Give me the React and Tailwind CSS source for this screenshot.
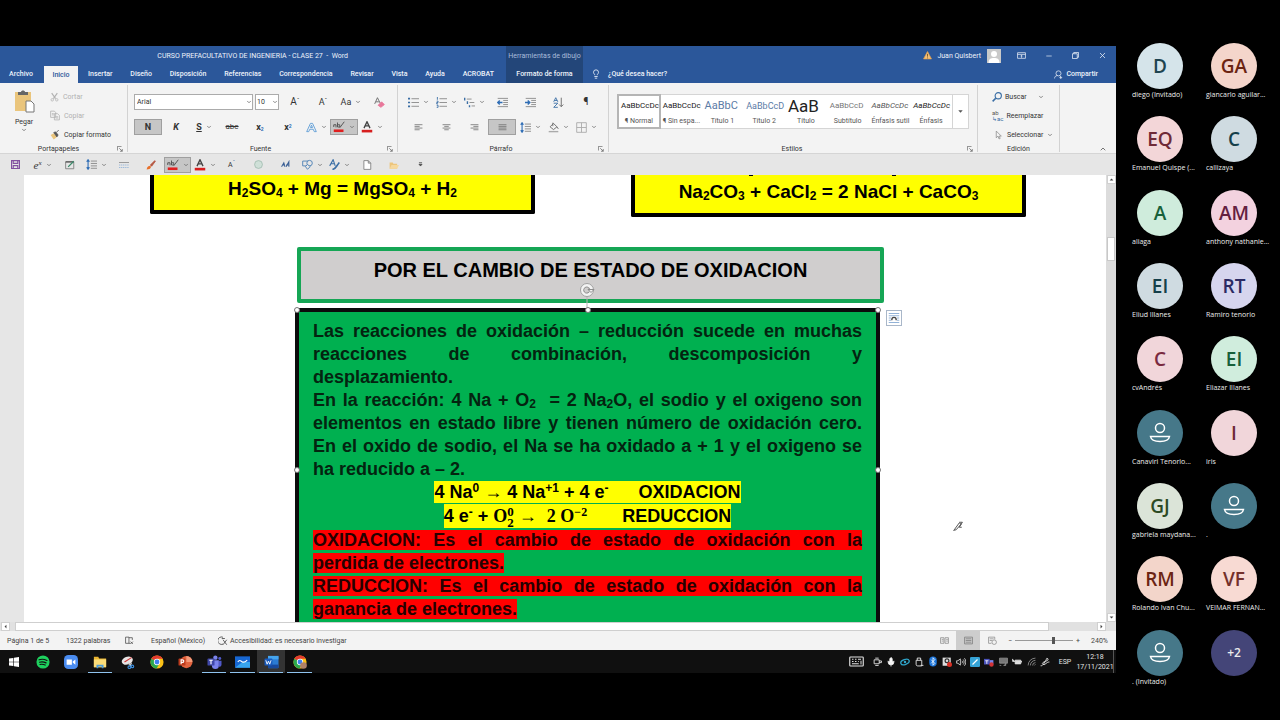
import React from 'react';
import { ChevronDown, ChevronUp, Lightbulb, Mic, X, Minus } from 'lucide-react';

const tabs = ['Insertar', 'Diseño', 'Disposición', 'Referencias', 'Correspondencia', 'Revisar', 'Vista', 'Ayuda', 'ACROBAT'];

const styles = [
    { name: '¶ Normal', sample: 'AaBbCcDc', look: 'text-[8px] text-[#222]', active: true },
    { name: '¶ Sin espa...', sample: 'AaBbCcDc', look: 'text-[8px] text-[#222]' },
    { name: 'Título 1', sample: 'AaBbC', look: 'text-[11px] text-[#5b7ba6]' },
    { name: 'Título 2', sample: 'AaBbCcD', look: 'text-[9px] text-[#5b7ba6]' },
    { name: 'Título', sample: 'AaB', look: 'text-[17px] text-[#222]' },
    { name: 'Subtítulo', sample: 'AaBbCcD', look: 'text-[8px] text-[#777]' },
    { name: 'Énfasis sutil', sample: 'AaBbCcDc', look: 'text-[8px] italic text-[#555]' },
    { name: 'Énfasis', sample: 'AaBbCcDc', look: 'text-[8px] italic text-[#222]' },
];

const people = [
    { initials: 'D', name: 'diego (Invitado)', color: 'bg-[#d5e4ea] text-[#1f4450]' },
    { initials: 'GA', name: 'giancarlo aguilar...', color: 'bg-[#f4d5cb] text-[#6b2412]' },
    { initials: 'EQ', name: 'Emanuel Quispe (...', color: 'bg-[#f3d6d8] text-[#6f2a37]' },
    { initials: 'C', name: 'callizaya', color: 'bg-[#cfdbe1] text-[#153f4a]' },
    { initials: 'A', name: 'aliaga', color: 'bg-[#cfecdc] text-[#17603a]' },
    { initials: 'AM', name: 'anthony nathanie...', color: 'bg-[#f3d2df] text-[#64203f]' },
    { initials: 'EI', name: 'Eliud Illanes', color: 'bg-[#cfdbe1] text-[#153f4a]' },
    { initials: 'RT', name: 'Ramiro tenorio', color: 'bg-[#d6d5ee] text-[#2b2a63]' },
    { initials: 'C', name: 'cvAndrés', color: 'bg-[#f1d6da] text-[#7a2a3f]' },
    { initials: 'EI', name: 'Eliazar Illanes', color: 'bg-[#d0eddd] text-[#17603a]' },
    { name: 'Canaviri Tenorio...', color: 'bg-[#467889] text-white' },
    { initials: 'I', name: 'iris', color: 'bg-[#f1d6da] text-[#6f2a37]' },
    { initials: 'GJ', name: 'gabriela maydana...', color: 'bg-[#dbe4d8] text-[#2c4a23]' },
    { name: '.', color: 'bg-[#467889] text-white' },
    { initials: 'RM', name: 'Rolando Ivan Chu...', color: 'bg-[#f3d5ca] text-[#6b2412]' },
    { initials: 'VF', name: 'VEIMAR FERNAN...', color: 'bg-[#f8dad3] text-[#74302b]' },
    { name: '. (Invitado)', color: 'bg-[#467889] text-white' },
];

export default function App() {
    return (
        <div className="min-h-screen bg-black flex text-[7px] leading-[10px] text-[#333]">
            <main className="flex-1 min-w-0 pt-[46px] font-[Roboto,sans-serif]">
                <TitleBar />
                <Ribbon />
                <QuickAccess />
                <Document />
                <StatusBar />
                <Taskbar />
            </main>
            <Participants />
        </div>
    );
}

/* ---------- helpers ---------- */

function Svg({ className = 'w-3 h-3', box = '0 0 16 16', children }) {
    return (
        <svg className={`shrink-0 ${className}`} viewBox={box} fill="none" stroke="currentColor" strokeWidth="1.3">
            {children}
        </svg>
    );
}

function Caret() {
    return <ChevronDown className="w-[6px] h-[6px] shrink-0 text-[#666]" strokeWidth={3} />;
}

function Tool({ label, caret, active, width = 'w-7', children }) {
    return (
        <button
            aria-label={label}
            className={`${width} h-4 shrink-0 flex items-center justify-center gap-1 ${active ? 'bg-[#c6c6c6] border border-[#9f9f9f]' : ''}`}
        >
            {children}
            {caret && <Caret />}
        </button>
    );
}

function Group({ title, className = '', launcher = true, children }) {
    return (
        <section className={`flex flex-col border-r border-[#d2d2d2] mt-[2px] mb-[1px] ${className}`}>
            <div className="flex-1 min-h-0">{children}</div>
            <div className="flex items-center h-[6px]">
                <h2 className="flex-1 text-center">{title}</h2>
                {launcher && (
                    <button aria-label={`Opciones de ${title}`} className="mr-1">
                        <Svg className="w-[6px] h-[6px] text-[#666]">
                            <path d="M1 12V1h11M6 6l8 8M14 8v6H8" strokeWidth="2" />
                        </Svg>
                    </button>
                )}
            </div>
        </section>
    );
}

/* ---------- title bar and tabs ---------- */

function TitleBar() {
    return (
        <header className="bg-[#2b579a] text-[#eef3fa] flex h-[37px]">
            <div className="w-[506px] flex flex-col">
                <div className="h-[19px] flex items-center justify-end pr-[158px] whitespace-pre">CURSO PREFACULTATIVO DE INGENIERIA - CLASE 27  -  Word</div>
                <nav className="flex-1 flex items-stretch font-medium">
                    <button className="w-11 pr-[2px]">Archivo</button>
                    <button className="w-[34px] mt-[1px] bg-[#f3f3f3] text-[#2b579a]">Inicio</button>
                    <div className="flex-1 flex items-stretch justify-between pl-[10px] pr-3">
                        {tabs.map((t) => <button key={t}>{t}</button>)}
                    </div>
                </nav>
            </div>
            <div className="w-[77px] bg-[#234679] flex flex-col text-center">
                <div className="h-[19px] flex items-center justify-center whitespace-nowrap text-[#a9bddb]">Herramientas de dibujo</div>
                <button className="flex-1 font-medium">Formato de forma</button>
            </div>
            <div className="flex-1 flex flex-col">
                <div className="h-[19px] flex items-center justify-end">
                    <Svg className="w-[9px] h-[9px] mr-[5px]" box="0 0 16 16">
                        <path d="M8 1l7 13H1z" fill="#f2c078" stroke="#e9a24a" />
                        <path d="M8 5v5M8 11.500v1.500" stroke="#5a3a10" />
                    </Svg>
                    <span>Juan Quisbert</span>
                    <Svg className="w-[14px] h-[14px] ml-[6px]" box="0 0 14 14">
                        <rect width="14" height="14" fill="#c9c9c9" stroke="none" />
                        <circle cx="7" cy="5" r="3" fill="#fff" stroke="none" />
                        <path d="M1.500 14c0-4 2-5 5.500-5s5.500 1 5.500 5z" fill="#fff" stroke="none" />
                    </Svg>
                    <button aria-label="Opciones de presentación" className="w-[27px] ml-[7px] flex justify-center">
                        <Svg className="w-[9px] h-[9px]"><path d="M1 3h14v10H1zM1 6h14M8 12V8M6 9.500l2-2 2 2" /></Svg>
                    </button>
                    <button aria-label="Minimizar" className="w-[27px] flex justify-center"><Minus className="w-2 h-2" /></button>
                    <button aria-label="Restaurar" className="w-[27px] flex justify-center">
                        <Svg className="w-[7px] h-[7px]"><path d="M1 4h11v11H1zM4 4V1h11v11h-3" strokeWidth="1.8" /></Svg>
                    </button>
                    <button aria-label="Cerrar" className="w-[27px] flex justify-center"><X className="w-[9px] h-[9px]" /></button>
                </div>
                <div className="flex-1 flex items-center justify-between pl-[8px] pr-[18px] font-medium">
                    <button className="flex items-center gap-[7px]">
                        <Lightbulb className="w-[10px] h-[10px]" /> ¿Qué desea hacer?
                    </button>
                    <button className="flex items-center gap-[3px]">
                        <Svg className="w-[9px] h-[9px]"><circle cx="8" cy="6" r="4.500" /><path d="M1 15c0-3 2-5 5-5M10 10l2 2M12 11v5M9.500 13.500h5" /></Svg>
                        Compartir
                    </button>
                </div>
            </div>
        </header>
    );
}

/* ---------- ribbon ---------- */

function Lines({ rows }) {
    return <Svg className="w-[9px] h-[9px] text-[#777]"><path d={rows} strokeWidth="1.500" /></Svg>;
}

function Ribbon() {
    return (
        <div className="bg-[#f3f3f3] h-[71px] flex border-b border-[#d5d5d5]">
            <Group title="Portapapeles" className="w-32">
                <div className="flex pt-[2px]">
                    <button className="w-12 pt-[3px] flex flex-col items-center self-start">
                        <Svg className="w-[22px] h-[23px]" box="0 0 22 23">
                            <rect x="2" y="2" width="16" height="19" fill="#eac57c" stroke="none" />
                            <path d="M5 5V2h3c0-2 4-2 4 0h3v3z" fill="#666" stroke="none" />
                            <path d="M13 11h5l3 3v8h-8z" fill="#fff" stroke="#777" strokeWidth="1" />
                        </Svg>
                        <span className="mt-[4px]">Pegar</span>
                        <Caret />
                    </button>
                    <div className="flex flex-col">
                        <button className="h-[19px] pl-[2px] flex items-center gap-[4px] text-[#b1b1b1]">
                            <Svg className="w-[9px] h-[10px]"><path d="M3 1l7 10M13 1L6 11" strokeWidth="2" /><circle cx="4" cy="13" r="2.200" /><circle cx="12" cy="13" r="2.200" /></Svg>
                            Cortar
                        </button>
                        <button className="h-[19px] pl-[2px] flex items-center gap-[4px] text-[#b1b1b1]">
                            <Svg className="w-[10px] h-[11px]"><path d="M1 1h6l2 2v8H1zM7 5h5l3 3v7H7zM3 5h3M3 7h3M9 10h4M9 12h4" /></Svg>
                            Copiar
                        </button>
                        <button className="h-[19px] pl-[2px] flex items-center gap-[4px]">
                            <Svg className="w-[10px] h-[10px]">
                                <path d="M1 8l5-3 5 6-5 4z" fill="#eac57c" stroke="none" />
                                <path d="M6 4l3-1 4 5-2 3zM10 4l4-4" stroke="#555" fill="#555" />
                            </Svg>
                            Copiar formato
                        </button>
                    </div>
                </div>
            </Group>

            <Group title="Fuente" className="w-[270px] pl-[6px]">
                <div className="flex items-center pt-[9px]">
                    <label className="relative mr-[2px]">
                        <select aria-label="Fuente" className="block appearance-none w-[119px] h-4 bg-white border border-[#ababab] pl-[2px]"><option>Arial</option></select>
                        <span className="absolute right-[1px] top-[5px]"><Caret /></span>
                    </label>
                    <label className="relative mr-[2px]">
                        <select aria-label="Tamaño de fuente" className="block appearance-none w-6 h-4 bg-white border border-[#ababab] pl-[1px]"><option>10</option></select>
                        <span className="absolute right-[1px] top-[5px]"><Caret /></span>
                    </label>
                    <Tool label="Aumentar tamaño"><span className="text-[10px]">A<sup className="text-[6px]">ˆ</sup></span></Tool>
                    <Tool label="Disminuir tamaño"><span className="text-[9px]">A<sup className="text-[6px]">ˇ</sup></span></Tool>
                    <Tool label="Cambiar mayúsculas" caret><span className="text-[9px]">Aa</span></Tool>
                    <Tool label="Borrar formato">
                        <Svg className="w-[11px] h-[11px]"><path d="M1 10L5 1l4 8M3 7h4" stroke="#666" /><path d="M6 12l5-5 4 4-5 4z" fill="#e8779a" stroke="#e8779a" /></Svg>
                    </Tool>
                </div>
                <div className="flex items-center pt-[9px]">
                    <Tool label="Negrita" active><b className="text-[9px]">N</b></Tool>
                    <Tool label="Cursiva"><b className="text-[9px] italic">K</b></Tool>
                    <Tool label="Subrayado" caret><b className="text-[9px] underline">S</b></Tool>
                    <Tool label="Tachado"><span className="text-[8px] line-through">abc</span></Tool>
                    <Tool label="Subíndice"><b className="text-[9px]">x<sub className="text-[5px] text-[#2f6db5]">2</sub></b></Tool>
                    <Tool label="Superíndice"><b className="text-[9px]">x<sup className="text-[5px] text-[#2f6db5]">2</sup></b></Tool>
                    <Tool label="Efectos de texto" caret><OutlinedA /></Tool>
                    <Tool label="Resaltado" caret active><Marker /></Tool>
                    <Tool label="Color de fuente" caret><FontColor /></Tool>
                </div>
            </Group>

            <Group title="Párrafo" className="w-[211px] pl-[6px]">
                <div className="flex items-center pt-[9px]">
                    <Tool label="Viñetas" caret>
                        <Svg className="w-[11px] h-[11px]"><path d="M5 2.500h11M5 8h11M5 13.500h11" stroke="#888" /><path d="M0 2.500h3M0 8h3M0 13.500h3" stroke="#3a6ea5" strokeWidth="2.500" /></Svg>
                    </Tool>
                    <Tool label="Numeración" caret>
                        <Svg className="w-[11px] h-[11px]"><path d="M5 2.500h11M5 8h11M5 13.500h11" stroke="#888" /><path d="M2 0v4M1 6h2v2H1v2h2M1 12h2v3H1" stroke="#3a6ea5" /></Svg>
                    </Tool>
                    <Tool label="Lista multinivel" caret>
                        <Svg className="w-[11px] h-[11px]"><path d="M4 3h7M8 8h7M11 13h5" stroke="#888" /><path d="M1 1v4M5 6v4M8 12v3" stroke="#3a6ea5" strokeWidth="2" /></Svg>
                    </Tool>
                    <Tool label="Disminuir sangría">
                        <Svg className="w-[11px] h-[11px]"><path d="M1 2h15M9 5h7M9 8h7M9 11h7M1 14h15" stroke="#888" /><path d="M8 8H1M4 5L1 8l3 3" stroke="#2f6db5" strokeWidth="2" /></Svg>
                    </Tool>
                    <Tool label="Aumentar sangría">
                        <Svg className="w-[11px] h-[11px]"><path d="M1 2h15M9 5h7M9 8h7M9 11h7M1 14h15" stroke="#888" /><path d="M0 8h7M4 5l3 3-3 3" stroke="#2f6db5" strokeWidth="2" /></Svg>
                    </Tool>
                    <Tool label="Ordenar">
                        <Svg className="w-[11px] h-[11px]"><path d="M1 7l3-6 3 6M2 5h4M1 9h6l-6 6h6" stroke="#3a6ea5" /><path d="M12 1v13M9 11l3 3 3-3" stroke="#666" /></Svg>
                    </Tool>
                    <Tool label="Mostrar todo"><span className="text-[10px]">¶</span></Tool>
                </div>
                <div className="flex items-center pt-[9px]">
                    <Tool label="Alinear a la izquierda"><Lines rows="M1 3h14M1 6h9M1 9h14M1 12h9" /></Tool>
                    <Tool label="Centrar"><Lines rows="M1 3h14M4 6h8M1 9h14M4 12h8" /></Tool>
                    <Tool label="Alinear a la derecha"><Lines rows="M1 3h14M6 6h9M1 9h14M6 12h9" /></Tool>
                    <Tool label="Justificar" active><Lines rows="M1 3h14M1 6h14M1 9h14M1 12h14" /></Tool>
                    <Tool label="Espaciado" caret><Spacing /></Tool>
                    <Tool label="Sombreado" caret>
                        <Svg className="w-[11px] h-[11px]"><path d="M3 7l5-5 5 5-5 4zM7 1v5M13 7l2 3" stroke="#666" /><path d="M1 14h14" stroke="#aaa" strokeWidth="2" /></Svg>
                    </Tool>
                    <Tool label="Bordes" caret>
                        <Svg className="w-[11px] h-[11px]"><path d="M1 1h14v14H1zM8 1v14M1 8h14" stroke="#aaa" /></Svg>
                    </Tool>
                </div>
            </Group>

            <Group title="Estilos" className="flex-1 min-w-0 pl-[8px]">
                <div className="mt-[9px] mr-2 h-[35px] flex bg-white border border-[#d5d5d5]">
                    {styles.map((s) => (
                        <button key={s.name} className={`flex-1 min-w-0 flex flex-col px-[3px] overflow-hidden ${s.active ? 'outline-2 -outline-offset-1 outline-[#b5b5b5]' : ''}`}>
                            <span className={`h-[21px] w-full flex items-center justify-start whitespace-nowrap ${s.look}`}>{s.sample}</span>
                            <span className="w-full text-center whitespace-nowrap text-[#555]">{s.name}</span>
                        </button>
                    ))}
                    <button aria-label="Más estilos" className="w-4 border-l border-[#d5d5d5] flex items-center justify-center">
                        <Svg className="w-[5px] h-[5px]"><path d="M1 4h14l-7 8z" fill="#555" stroke="none" /></Svg>
                    </button>
                </div>
            </Group>

            <Group title="Edición" launcher={false} className="w-[82px]">
                <div className="flex flex-col pl-[14px] pt-[2px]">
                    <button className="h-[19px] flex items-center gap-[3px]">
                        <Svg className="w-[10px] h-[10px] text-[#3a6ea5]"><circle cx="10" cy="6" r="5" strokeWidth="1.800" /><path d="M6 10l-5 5" strokeWidth="2.500" /></Svg>
                        Buscar <span className="ml-[8px]"><Caret /></span>
                    </button>
                    <button className="h-[19px] flex items-center gap-[3px]">
                        <span className="text-[6px] leading-[6px] text-[#555] text-left">ab<br /><span className="text-[#3a6ea5]">↳ac</span></span>
                        Reemplazar
                    </button>
                    <button className="h-[19px] flex items-center gap-[4px] pl-[2px]">
                        <Svg className="w-[9px] h-[10px] text-[#888]"><path d="M4 1v12l3-3 2 5 2-1-2-4h4z" /></Svg>
                        Seleccionar <Caret />
                    </button>
                </div>
            </Group>

            <div className="w-14 flex items-end justify-end pr-[9px]">
                <button aria-label="Contraer la cinta"><ChevronUp className="w-[8px] h-[8px]" /></button>
            </div>
        </div>
    );
}

function OutlinedA() {
    return (
        <Svg className="w-[11px] h-[11px]">
            <path d="M1 14L6.500 2h3L15 14h-3l-1.500-3.500h-5L4 14zM6.500 8h3L8 4.500z" stroke="#5b9bd5" />
        </Svg>
    );
}

function Marker() {
    return (
        <Svg className="w-[12px] h-[12px]">
            <path d="M1 8V5h3v3.500M6 2v6h3V5H6M15 1L9 9" stroke="#555" />
            <path d="M1 13h13" stroke="#e02020" strokeWidth="3.500" />
        </Svg>
    );
}

function FontColor() {
    return (
        <Svg className="w-[12px] h-[12px]">
            <path d="M4 9.500L8 1l4 8.500M5.500 6.500h5" stroke="#444" strokeWidth="1.800" />
            <path d="M1 13.500h14" stroke="#d61f1f" strokeWidth="3.500" />
        </Svg>
    );
}

function Spacing() {
    return (
        <Svg className="w-[11px] h-[11px]">
            <path d="M7 3h9M7 6.500h9M7 10h9M7 13.500h9" stroke="#888" />
            <path d="M3 1v14M1 4l2-3 2 3M1 12l2 3 2-3" stroke="#2f6db5" strokeWidth="1.600" />
        </Svg>
    );
}

/* ---------- quick access toolbar ---------- */

function QuickAccess() {
    const w = 'w-[27px]';
    return (
        <div className="bg-[#e6e6e6] h-[21px] flex items-center px-[2px]">
            <Tool width={w} label="Guardar">
                <Svg className="w-[9px] h-[9px] text-[#8250a0]"><path d="M1 1h14v14H1zM4 1v5h8V1M4 15v-5h8v5" strokeWidth="2" /></Svg>
            </Tool>
            <Tool width={w} label="Ecuación" caret><span className="font-['Liberation_Serif',serif] italic text-[11px]">e<sup className="text-[7px]">x</sup></span></Tool>
            <Tool width={w} label="Editar">
                <Svg className="w-[10px] h-[10px]"><path d="M1 3h13v11H1z" stroke="#777" /><path d="M1 3h13" stroke="#555" strokeWidth="2" /><path d="M5 11l9-9" stroke="#3a8a6a" strokeWidth="2" /></Svg>
            </Tool>
            <Tool width={w} label="Interlineado" caret><Spacing /></Tool>
            <Tool width={w} label="Regla">
                <Svg className="w-[10px] h-[10px]"><path d="M0 4h16" stroke="#888" /><path d="M0 8h16M0 12h16" stroke="#8db0d8" strokeDasharray="2 1" /></Svg>
            </Tool>
            <Tool width={w} label="Pincel">
                <Svg className="w-[10px] h-[10px]"><path d="M7 8l7-7 1 1-6 8z" fill="#b4533c" stroke="#b4533c" /><path d="M1 15c1-5 3-6 6-6l1 2c-1 3-3 4-7 4z" fill="#e8702a" stroke="none" /></Svg>
            </Tool>
            <Tool width={w} label="Resaltar" caret active><Marker /></Tool>
            <Tool width={w} label="Color" caret><FontColor /></Tool>
            <Tool width={w} label="Reducir fuente"><span>A<sup className="text-[5px] text-[#3a6ea5]">ˇ</sup></span></Tool>
            <Tool width={w} label="Elipse"><Svg className="w-[9px] h-[9px]"><circle cx="8" cy="8" r="7" fill="#cfe0d8" stroke="#9bb8ab" /></Svg></Tool>
            <Tool width={w} label="Reemplazar">
                <Svg className="w-[9px] h-[9px] text-[#3a5f95]"><path d="M1 12l4-7 2 7M3 9h4M9 12l5-9v9M9 9h6" strokeWidth="1.800" /></Svg>
            </Tool>
            <Tool width={w} label="Formas" caret>
                <Svg className="w-[11px] h-[11px] text-[#4a7fb5]"><path d="M1 3h9v7H1z" /><circle cx="11" cy="6" r="4" fill="#e6e6e6" /><path d="M8 15l-3-4 3-3 4 3z" fill="#e6e6e6" /></Svg>
            </Tool>
            <Tool width={w} label="Estilo de texto" caret>
                <Svg className="w-[11px] h-[11px] text-[#3a6ea5]"><path d="M1 10L6 1l3 9M3 7h5" strokeWidth="1.600" /><path d="M5 15c5 0 5-4 10-10" strokeWidth="2.400" /></Svg>
            </Tool>
            <Tool width={w} label="Nuevo"><Svg className="w-[10px] h-[10px]"><path d="M3 1h7l4 4v10H3zM10 1v4h4" fill="#fff" stroke="#777" /></Svg></Tool>
            <Tool width={w} label="Abrir">
                <Svg className="w-[10px] h-[10px]"><path d="M1 14V4h5l1 2h6v8z" fill="#edc57b" stroke="none" /><path d="M1 14l3-6h12l-3 6z" fill="#f6d89d" stroke="none" /></Svg>
            </Tool>
            <Tool width={w} label="Personalizar"><Svg className="w-[5px] h-[5px]"><path d="M3 2h10M3 7l5 6 5-6z" fill="#555" strokeWidth="2" /></Svg></Tool>
        </div>
    );
}

/* ---------- document ---------- */

function Document() {
    return (
        <>
            <div className="flex bg-[#e6e6e6] overflow-hidden">
                <article className="flex-1 ml-6 bg-white font-['Liberation_Sans',Arial,sans-serif] font-bold text-black">
                    <div className="flex items-start gap-24 pl-[126px]">
                        <div className="w-[385px] h-[39px] bg-[#ffff00] border-4 border-t-0 border-black rounded-b-[2px] text-center text-[19px] leading-[28px]">
                            H<Sub>2</Sub>SO<Sub>4</Sub> + Mg = MgSO<Sub>4</Sub> + H<Sub>2</Sub>
                        </div>
                        <div className="relative w-[395px] h-[42px] pt-[3px] bg-[#ffff00] border-4 border-t-0 border-black rounded-b-[2px] text-center text-[19px] leading-[28px]">
                            Na<Sub>2</Sub>CO<Sub>3</Sub> + CaCl<Sub>2</Sub> = 2 NaCl + CaCO<Sub>3</Sub>
                            {/* descenders of the line scrolled out of view */}
                            <span className="absolute top-0 left-[114px] w-1 h-[1px] bg-black" />
                            <span className="absolute top-0 left-[257px] w-1 h-[1px] bg-black" />
                        </div>
                    </div>

                    <h1 className="relative ml-[273px] mt-[30px] w-[587px] h-[56px] pt-[5px] bg-[#d0cece] border-4 border-[#16a655] rounded-[2px] text-center text-[20px] leading-[28px]">
                        POR EL CAMBIO DE ESTADO DE OXIDACION
                        <RotateHandle />
                    </h1>

                    <div className="relative ml-[271px] mt-[5px] w-[585px] bg-[#00b050] border-4 border-b-0 border-[#0c0c0c] pt-[8px] pb-[1px] px-[14px] text-[18px] leading-[23px] text-[#042410]">
                        <Justified>Las reacciones de oxidación – reducción sucede en muchas</Justified>
                        <Justified>reacciones de combinación, descomposición y</Justified>
                        <p>desplazamiento.</p>
                        <Justified>En la reacción: 4 Na + O<Sub>2</Sub>&nbsp; = 2 Na<Sub>2</Sub>O, el sodio y el oxigeno son</Justified>
                        <Justified>elementos en estado libre y tienen número de oxidación cero.</Justified>
                        <Justified>En el oxido de sodio, el Na se ha oxidado a + 1 y el oxigeno se</Justified>
                        <p>ha reducido a – 2.</p>
                        <p className="text-center text-black">
                            <span className="inline-block align-top bg-[#ffff00] h-[22px] whitespace-pre">
                                4 Na<Sup>0</Sup> <Arrow /> 4 Na<Sup>+1</Sup> + 4 e<Sup>-</Sup>{'      '}OXIDACION
                            </span>
                        </p>
                        <p className="text-center text-black leading-[25px] h-[25px]">
                            <span className="inline-block align-top bg-[#ffff00] h-[24px] whitespace-pre">
                                4 e<Sup>-</Sup> + <Math>O</Math>
                                <span className="inline-flex flex-col align-middle font-['Liberation_Serif',serif] text-[13px] leading-[11px]"><span>0</span><span>2</span></span>
                                {' '}<Arrow />{'  '}<Math>2 O<Sup>−2</Sup></Math>{'       '}REDUCCION
                            </span>
                        </p>
                        <Justified><Red>OXIDACION: Es el cambio de estado de oxidación con la</Red></Justified>
                        <p><Red>perdida de electrones.</Red></p>
                        <Justified><Red>REDUCCION: Es el cambio de estado de oxidación con la</Red></Justified>
                        <p><Red>ganancia de electrones.</Red></p>

                        <Handle place="-left-[5px] -top-[5px]" />
                        <Handle place="left-1/2 -translate-x-1/2 -top-[5px]" />
                        <Handle place="-right-[5px] -top-[5px]" />
                        <Handle place="-left-[5px] top-1/2" />
                        <Handle place="-right-[5px] top-1/2" />

                        <button aria-label="Opciones de diseño" className="absolute -right-[26px] -top-[2px] w-4 h-4 bg-white border border-[#a9b7c9] flex items-center justify-center">
                            <Svg className="w-[12px] h-[12px]">
                                <path d="M1 2h14M1 5h14M1 8h3M12 8h3M1 11h3M12 11h3M1 14h14" stroke="#8fb0d6" />
                                <path d="M5 11c0-5 6-5 6 0" stroke="#444" strokeWidth="1.800" />
                            </Svg>
                        </button>
                        <Svg className="absolute left-[654px] top-[208px] w-[10px] h-[12px] text-[#333]">
                            <path d="M2 14L10 3l3 2-8 9-4 1zM10 2h5l-5 8h4" />
                        </Svg>
                    </div>
                </article>
                <div className="w-[10px] bg-[#dcdcdc] flex flex-col px-[1px]">
                    <ScrollButton label="Subir" d="M2 11h12L8 5z" />
                    <div className="mt-[53px] h-6 bg-white border border-[#c8c8c8]" />
                    <div className="flex-1" />
                    <ScrollButton label="Bajar" d="M2 5h12l-6 6z" />
                </div>
            </div>
            <div className="h-[9px] bg-[#e1e1e1] flex items-stretch pl-[1px] pr-[10px]">
                <ScrollButton label="Izquierda" d="M11 2v12L5 8z" />
                <div className="ml-[5px] flex-1 bg-white border border-[#cfcfcf]" />
                <div className="w-12" />
                <ScrollButton label="Derecha" d="M5 2v12l6-6z" />
            </div>
        </>
    );
}

function ScrollButton({ label, d }) {
    return (
        <button aria-label={label} className="w-[9px] h-[9px] shrink-0 bg-white border border-[#d0d0d0] flex items-center justify-center">
            <Svg className="w-[5px] h-[5px]"><path d={d} fill="#444" stroke="none" /></Svg>
        </button>
    );
}

function RotateHandle() {
    return (
        <Svg className="absolute left-[278px] top-[32px] w-[16px] h-[28px] text-[#8d8d8d]" box="0 0 16 28">
            <circle cx="8" cy="7" r="5" stroke="#f4f4f4" strokeWidth="3.500" />
            <circle cx="8" cy="7" r="6.500" strokeWidth="0.800" />
            <path d="M10.500 6a3 3 0 1 0-.5 3M9 6.500h6l-3 3z" strokeWidth="1" />
            <path d="M8 14v14" stroke="#b5b5b5" strokeWidth="1" />
        </Svg>
    );
}

function Handle({ place }) {
    return <span className={`absolute ${place} w-[6px] h-[6px] rounded-full bg-white border border-[#777]`} />;
}

function Justified({ children }) {
    return <p className="text-justify [text-align-last:justify]">{children}</p>;
}

function Red({ children }) {
    return <span className="bg-[#ff0000] text-[#260000]">{children}</span>;
}

function Math({ children }) {
    return <span className="font-['Liberation_Serif',serif]">{children}</span>;
}

function Sub({ children }) {
    return <sub className="text-[12px] leading-none bottom-[-2px]">{children}</sub>;
}

function Sup({ children }) {
    return <sup className="text-[12px] leading-none">{children}</sup>;
}

function Arrow() {
    return <span className="font-['Liberation_Serif',serif] font-normal">→</span>;
}

/* ---------- status bar ---------- */

function StatusBar() {
    return (
        <footer className="h-[19px] bg-[#f3f3f3] flex items-center pl-[7px] pr-[8px] text-[#444]">
            <span className="w-[59px]">Página 1 de 5</span>
            <span className="w-[59px]">1322 palabras</span>
            <Svg className="w-[9px] h-[9px] mr-[17px]"><path d="M1 2h6v11H1zM7 3h6v4M7 13h3M10 10l4 4M14 10l-4 4" /></Svg>
            <span className="w-[67px]">Español (México)</span>
            <Svg className="w-[10px] h-[10px] mr-[2px]"><path d="M8 2a6 6 0 1 0 0 11M8 6l6 8M14 6l-6 8M6 4h5" /></Svg>
            <span>Accesibilidad: es necesario investigar</span>
            <div className="flex-1" />
            <button aria-label="Modo de lectura" className="w-6 flex justify-center"><Svg className="w-[9px] h-[9px] text-[#888]"><path d="M1 3h6v10H1zM9 3h6v10H9zM3 6h3M3 9h3M11 6h3M11 9h3" /></Svg></button>
            <button aria-label="Diseño de impresión" className="w-6 self-stretch bg-[#cdcdcd] flex items-center justify-center"><Svg className="w-[9px] h-[9px] text-[#777]"><path d="M1 2h14v12H1zM3 5h10M3 8h10M3 11h10" /></Svg></button>
            <button aria-label="Diseño web" className="w-6 flex justify-center"><Svg className="w-[9px] h-[9px] text-[#888]"><path d="M1 2h11v4M1 2v11h5M3 5h7M3 8h4" /><circle cx="11" cy="11" r="4" /></Svg></button>
            <button aria-label="Alejar" className="ml-[2px] w-[8px] text-center">−</button>
            <input
                type="range"
                aria-label="Zoom"
                defaultValue="68"
                className="mx-[1px] w-[58px] h-[8px] appearance-none bg-[linear-gradient(#999,#999)] bg-[length:100%_1px] bg-center bg-no-repeat [&::-webkit-slider-thumb]:appearance-none [&::-webkit-slider-thumb]:w-[3px] [&::-webkit-slider-thumb]:h-[7px] [&::-webkit-slider-thumb]:bg-[#555]"
            />
            <button aria-label="Acercar" className="w-[8px] text-center">+</button>
            <span className="w-[26px] text-right">240%</span>
        </footer>
    );
}

/* ---------- windows taskbar ---------- */

function TaskButton({ label, open, active, children }) {
    return (
        <button aria-label={label} className={`relative flex items-center justify-center ${active ? 'bg-[#333]' : ''}`}>
            {children}
            {open && <span className="absolute bottom-0 inset-x-[2px] h-[1px] bg-[#8fc3ee]" />}
        </button>
    );
}

function Chrome({ badge }) {
    return (
        <Svg className="w-[14px] h-[14px]">
            <g stroke="none">
                <circle cx="8" cy="8" r="7.500" fill="#fbc116" />
                <path d="M8 8L1.500 4.250A7.500 7.500 0 0 1 14.500 4.250H8z" fill="#e33b2e" />
                <path d="M8 8L1.500 4.250A7.500 7.500 0 0 0 7.500 15.500L11 9.500z" fill="#2da94f" />
                <circle cx="8" cy="8" r="3.600" fill="#fff" />
                <circle cx="8" cy="8" r="2.800" fill="#4080ee" />
                {badge && <circle cx="12" cy="12" r="3.800" fill="#b08068" />}
            </g>
        </Svg>
    );
}

function Taskbar() {
    const t = 'w-[14px] flex justify-center';
    return (
        <footer className="h-[23px] bg-[#101010] text-[#e4e4e4] flex">
            <div className="w-[314px] grid grid-cols-11">
                <TaskButton label="Inicio">
                    <Svg className="w-[10px] h-[10px]"><path d="M0 2.500l7-1v6H0zM8 1.300L16 0v7.500H8zM0 8.500h7v6l-7-1zM8 8.500h8V16l-8-1.300z" fill="#fff" stroke="none" /></Svg>
                </TaskButton>
                <TaskButton label="Spotify">
                    <Svg className="w-[14px] h-[14px]"><circle cx="8" cy="8" r="7.500" fill="#1ed15e" stroke="none" /><path d="M3.500 5.500c3-1 6-.7 9 .8M4 8.200c3-.8 5-.5 7.500.8M4.500 10.800c2-.5 4-.3 6 .7" stroke="#111" strokeLinecap="round" /></Svg>
                </TaskButton>
                <TaskButton label="Zoom">
                    <Svg className="w-[14px] h-[14px]"><rect width="16" height="16" rx="5" fill="#4a8cf0" stroke="none" /><path d="M3 5h6v6H3zM10 7.500L13 5v6l-3-2.500z" fill="#fff" stroke="none" /></Svg>
                </TaskButton>
                <TaskButton label="Explorador" open>
                    <Svg className="w-[14px] h-[14px]"><path d="M1 2h5l1 2h8v10H1z" fill="#eab530" stroke="none" /><path d="M1 5h14v9H1z" fill="#fbdc78" stroke="none" /><path d="M4 15v-4h8v4h-2v-2H6v2z" fill="#4a9ad8" stroke="none" /></Svg>
                </TaskButton>
                <TaskButton label="Recortes">
                    <Svg className="w-[14px] h-[14px]"><ellipse cx="7" cy="6.500" rx="6.500" ry="4.500" fill="#e8e4e4" stroke="none" transform="rotate(-20 7 6)" /><path d="M4 8l8-5" stroke="#c33" /><path d="M8 9l4 4M12 9l-2 4" stroke="#ccc" /><circle cx="9.500" cy="14" r="1.500" stroke="#3a8ad8" /><circle cx="13" cy="13" r="1.500" stroke="#3a8ad8" /></Svg>
                </TaskButton>
                <TaskButton label="Chrome"><Chrome /></TaskButton>
                <TaskButton label="PowerPoint">
                    <Svg className="w-[15px] h-[14px]"><circle cx="9" cy="8" r="7" fill="#e2643f" stroke="none" /><path d="M9 1a7 7 0 0 1 7 7H9z" fill="#f59a78" stroke="none" /><rect y="4" width="8" height="8" rx="1" fill="#bd3b1c" stroke="none" /><path d="M3 10.500v-5h1.500a1.400 1.400 0 0 1 0 3H3" stroke="#fff" /></Svg>
                </TaskButton>
                <TaskButton label="Teams" open>
                    <Svg className="w-[15px] h-[14px]"><circle cx="9" cy="3" r="2.500" fill="#7b83eb" stroke="none" /><circle cx="14" cy="4" r="1.700" fill="#5059c9" stroke="none" /><path d="M5 6h8v6a4 4 0 0 1-8 0z" fill="#7b83eb" stroke="none" /><path d="M13 6.500h3v4a3 3 0 0 1-3 3z" fill="#5059c9" stroke="none" /><rect y="4" width="8" height="8" rx="1" fill="#4048a8" stroke="none" /><path d="M2 6h4M4 6v4.500" stroke="#fff" /></Svg>
                </TaskButton>
                <TaskButton label="Pizarra" open>
                    <Svg className="w-[15px] h-[14px]" box="0 0 16 14"><rect y="1" width="16" height="12" fill="#1767d2" stroke="none" /><path d="M0 13l8-6h8v6z" fill="#38a5ee" stroke="none" /><path d="M3 7c2-3 3-1 5 0s3 0 5-2" stroke="#fff" /></Svg>
                </TaskButton>
                <TaskButton label="Word" open active>
                    <Svg className="w-[15px] h-[14px]"><rect x="4" y="1" width="12" height="14" rx="1" fill="#2b7cd3" stroke="none" /><path d="M4 1h12v4H4z" fill="#45a5ee" stroke="none" /><path d="M4 11h12v4H4z" fill="#184a9c" stroke="none" /><rect y="4" width="9" height="8" rx="1" fill="#185abd" stroke="none" /><path d="M1.500 6l1.500 4.500L4.500 7 6 10.500 7.500 6" stroke="#fff" strokeWidth="1" /></Svg>
                </TaskButton>
                <TaskButton label="Chrome, perfil" open><Chrome badge /></TaskButton>
            </div>
            <div className="flex-1" />
            <div className="flex items-center">
                <Svg className="w-[15px] h-[11px] mr-[6px]" box="0 0 20 14"><rect x="1" y="1" width="18" height="12" rx="1" strokeWidth="1.500" /><path d="M4 4h2M8 4h2M12 4h4M4 7h2M8 7h2M12 7h1M4 10h9M16 6v5" /></Svg>
                <span className={t}><Svg className="w-[9px] h-[9px]"><path d="M2 5h9v7H2zM11 7h4v3h-4M4 2h6M4 15h6" strokeWidth="1.600" /></Svg></span>
                <span className={t}><Mic className="w-[10px] h-[10px] fill-white" /></span>
                <span className={t}><Svg className="w-[10px] h-[10px]"><ellipse cx="8" cy="8" rx="7" ry="4" stroke="#2fa4c9" strokeWidth="2" transform="rotate(-20 8 8)" /><circle cx="8" cy="8" r="2" fill="#2fa4c9" stroke="none" /></Svg></span>
                <span className={t}><Svg className="w-[9px] h-[10px]"><path d="M4 5V1h6v4M2 5h10v10H5c-2 0-3-1-3-3zM10 14h5" strokeWidth="1.600" /></Svg></span>
                <span className={t}><Svg className="w-[10px] h-[11px]"><rect x="2" y="0" width="12" height="16" rx="6" fill="#1a73d8" stroke="none" /><path d="M5 5l6 6-3 3V2l3 3-6 6" stroke="#fff" /></Svg></span>
                <span className={t}><Svg className="w-[10px] h-[10px]"><rect x="1" y="1" width="13" height="13" fill="#ddd" stroke="none" /><circle cx="8" cy="6" r="3" stroke="#333" strokeWidth="2" /><circle cx="12" cy="12" r="4" fill="#d93025" stroke="none" /></Svg></span>
                <span className={t}><Svg className="w-[10px] h-[10px]"><path d="M1 6h2l4-3v10L3 10H1zM9.500 6c1 1 1 3 0 4M11.500 4c2 2 2 6 0 8M13.500 2c3 3 3 9 0 12" /></Svg></span>
                <span className={t}><Svg className="w-[10px] h-[10px]"><rect width="16" height="16" rx="2" fill="#35a3d6" stroke="none" /><path d="M4 12l8-8" stroke="#fff" strokeWidth="2" /></Svg></span>
                <span className={t}><Svg className="w-[10px] h-[10px]"><rect y="3" width="9" height="9" fill="#4b53bc" stroke="none" /><path d="M9 5h6v6H9z" fill="#7b83eb" stroke="none" /><path d="M2 6h5M4.500 6v5" stroke="#fff" /><circle cx="12" cy="12" r="3.500" fill="#d13438" stroke="none" /></Svg></span>
                <span className={t}><Svg className="w-[9px] h-[9px] text-[#999]"><path d="M1 2h14v9H1zM1 15h3M12 11v4H8" fill="#777" /></Svg></span>
                <span className={t}><Svg className="w-[10px] h-[10px]"><path d="M5 5h9v6H5zM14 7h2v2M1 3v4h4" fill="#ddd" /></Svg></span>
                <span className={t}><Svg className="w-[9px] h-[9px] text-[#aaa]"><path d="M2 15A13 13 0 0 1 15 2M6 15A9 9 0 0 1 15 6M10 15a5 5 0 0 1 5-5M13 15l2-2" /></Svg></span>
                <span className={t}><Svg className="w-[10px] h-[10px]"><path d="M1 14c4 1 8-8 10-12 2 0 3 3 0 4S5 8 4 10s4 3 5 1 4-3 6-3" strokeWidth="1.500" /></Svg></span>
                <span className="w-[26px] text-center">ESP</span>
                <div className="w-[34px] leading-[10px] whitespace-nowrap flex flex-col items-center"><span>12:18</span><span>17/11/2021</span></div>
                <span className="ml-[1px] mr-[2px] h-[23px] border-l border-[#555]" />
            </div>
        </footer>
    );
}

/* ---------- call participants ---------- */

function Participants() {
    return (
        <aside className="w-[164px] pl-4 pt-[43px] pb-[17px] grid grid-cols-2 grid-rows-9 font-['Open_Sans',sans-serif] text-[#ececec]">
            {people.map((p, i) => (
                <figure key={i}>
                    <div className={`ml-[5px] w-[46px] h-[46px] rounded-full flex items-center justify-center text-[19px] font-semibold ${p.color}`}>
                        {p.initials || (
                            <Svg className="w-[22px] h-[22px]" box="0 0 22 22">
                                <circle cx="11" cy="6" r="4.500" strokeWidth="1.500" />
                                <path d="M1.500 14.500h19c-.5 3-4 5-9.500 5s-9-2-9.500-5z" strokeWidth="1.500" />
                            </Svg>
                        )}
                    </div>
                    <figcaption className="mt-[1px] whitespace-nowrap">{p.name}</figcaption>
                </figure>
            ))}
            <button className="ml-[5px] w-[46px] h-[46px] rounded-full bg-[#444578] text-[12px] font-semibold">+2</button>
        </aside>
    );
}
